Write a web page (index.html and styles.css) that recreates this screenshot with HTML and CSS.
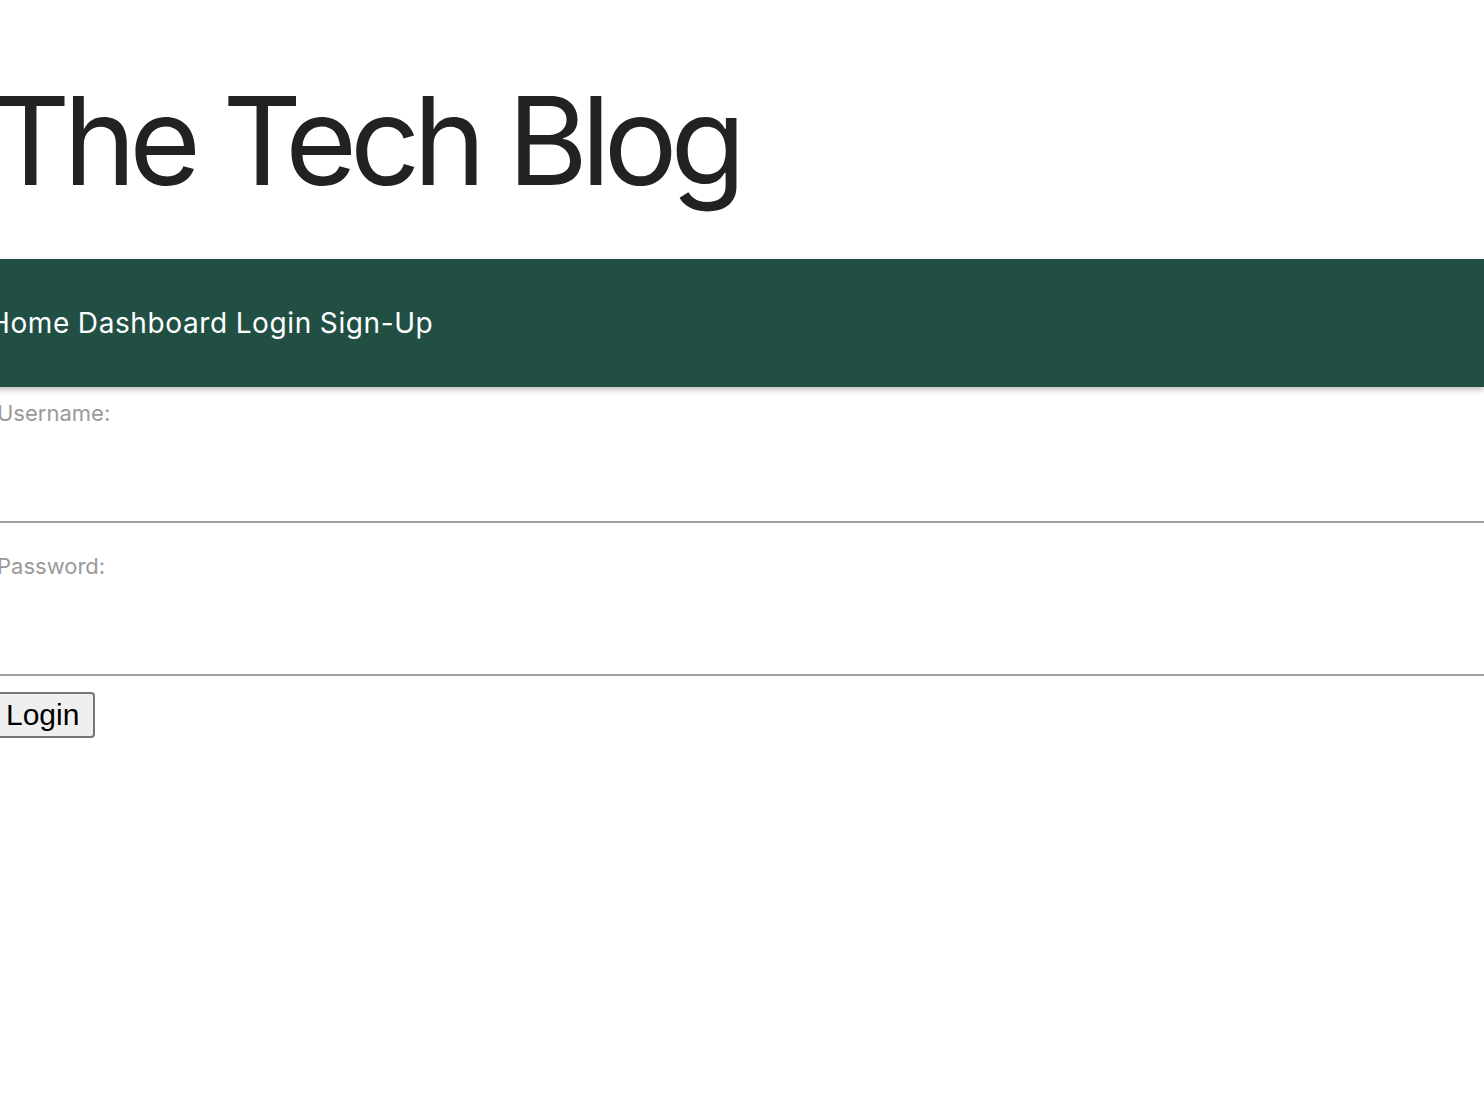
FILE: index.html
```html
<!DOCTYPE html>
<html lang="en">
<head>
<meta charset="utf-8">
<title>The Tech Blog</title>
<link rel="stylesheet" href="styles.css">
</head>
<body>
<header class="site-header">
  <h1 class="site-title">The Tech Blog</h1>
</header>
<nav class="site-nav">
  <a class="nav-link" href="#">Home</a> <a class="nav-link" href="#">Dashboard</a> <a class="nav-link" href="#">Login</a> <a class="nav-link" href="#">Sign-Up</a>
</nav>
<main class="login">
  <form class="login-form">
    <div class="field">
      <label class="field-label" for="username">Username:</label>
      <input class="field-input" id="username" type="text">
    </div>
    <div class="field">
      <label class="field-label" for="password">Password:</label>
      <input class="field-input" id="password" type="password">
    </div>
    <button class="login-btn" type="submit">Login</button>
  </form>
</main>
</body>
</html>
```

FILE: styles.css
```css
html, body {
  margin: 0;
  padding: 0;
  background: #ffffff;
  overflow: hidden;
}

body {
  font-family: Inter, "Liberation Sans", sans-serif;
  color: #222222;
}

.site-header {
  padding: 66px 0 44px;
}

.site-title {
  margin: 0 0 0 -9px;
  font-family: Inter, "Liberation Sans", sans-serif;
  font-weight: 400;
  font-size: 123px;
  line-height: 149px;
  letter-spacing: -7px;
  word-spacing: 1px;
  color: #222222;
  white-space: nowrap;
}

.site-nav {
  height: 128px;
  background: #214f43;
  display: flex;
  align-items: center;
  gap: 8px;
  margin-left: -11px;
  box-shadow: 0 3px 6px rgba(0, 0, 0, 0.25);
  position: relative;
}

.nav-link {
  color: #ffffff;
  text-decoration: none;
  font-size: 28px;
  line-height: 34px;
  letter-spacing: 0.6px;
}

.login {
  padding-top: 13px;
}

.login-form {
  display: flex;
  flex-direction: column;
  align-items: flex-start;
}

.field {
  width: 100%;
  display: flex;
  flex-direction: column;
  margin-bottom: 30px;
}

.field:last-of-type {
  margin-bottom: 16px;
}

.field-label {
  margin-left: -3px;
  font-size: 22px;
  line-height: 27px;
  color: #9a9a9a;
}

.field-input {
  box-sizing: border-box;
  width: 100%;
  height: 96px;
  margin: 0;
  border: none;
  border-bottom: 2px solid #a0a0a0;
  background: transparent;
  outline: none;
  font-size: 22px;
}

.login-btn {
  margin-left: -10px;
  height: 46px;
  padding: 0 14px;
  font-family: "Liberation Sans", Arial, sans-serif;
  font-size: 30px;
  line-height: 40px;
  color: #000000;
  background: #efefef;
  border: 2px solid #767676;
  border-radius: 4px;
}
```
